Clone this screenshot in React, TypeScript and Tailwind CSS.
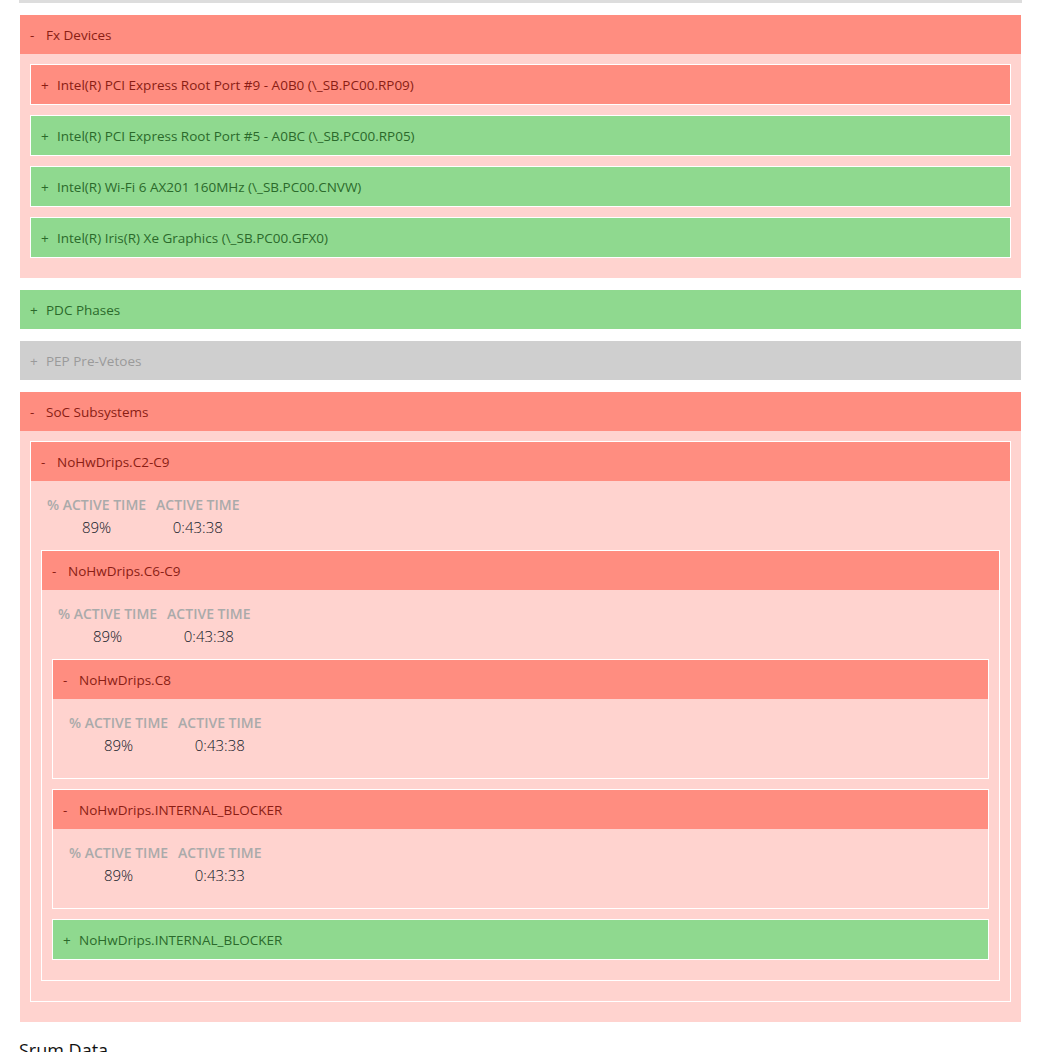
import type { ReactNode } from 'react';

type Tone = 'red' | 'green' | 'gray';

const headerTone: Record<Tone, string> = {
    red: 'bg-[#ff8d80] text-[#8a1d14]',
    green: 'bg-[#8fd98f] text-[#2b6a2b]',
    gray: 'bg-[#cfcfcf] text-[#9a9a9a]',
};

function Section({ title, tone, open, children }: { title: string; tone: Tone; open?: boolean; children?: ReactNode }) {
    return (
        <div className="mb-[10px] border border-white">
            <div className={`flex h-[39px] items-center pl-[10px] pt-[1px] text-[13.5px] ${headerTone[tone]}`}>
                <span className="inline-block w-[16px]">{open ? '-' : '+'}</span>
                <span>{title}</span>
            </div>
            {open && <div className="bg-[#ffd3cf] p-[10px]">{children}</div>}
        </div>
    );
}

function Stats({ pct, time }: { pct: string; time: string }) {
    return (
        <div className="mb-[10px] h-[49px] pl-[1px]">
            <div className="inline-grid grid-cols-[auto_auto]">
                <div className="flex h-[26px] items-center px-[5px] text-[14px] font-semibold text-[#aaaaaa]">% ACTIVE TIME</div>
                <div className="flex h-[26px] items-center px-[5px] text-[14px] font-semibold text-[#aaaaaa]">ACTIVE TIME</div>
                <div className="h-[20px] px-[5px] text-center text-[15px] font-light leading-[20px] text-[#111827]">{pct}</div>
                <div className="h-[20px] px-[5px] text-center text-[15px] font-light leading-[20px] text-[#111827]">{time}</div>
            </div>
        </div>
    );
}

export default function App() {
    return (
        <div className="min-h-screen bg-white font-['Open_Sans',sans-serif]">
            <div className="ml-[19px] w-[1003px]">
                <div className="mb-[10px] h-[4px] border-b border-white bg-[#dddddd]" />

                <Section title="Fx Devices" tone="red" open>
                    <Section title="Intel(R) PCI Express Root Port #9 - A0B0 (\_SB.PC00.RP09)" tone="red" />
                    <Section title="Intel(R) PCI Express Root Port #5 - A0BC (\_SB.PC00.RP05)" tone="green" />
                    <Section title="Intel(R) Wi-Fi 6 AX201 160MHz (\_SB.PC00.CNVW)" tone="green" />
                    <Section title="Intel(R) Iris(R) Xe Graphics (\_SB.PC00.GFX0)" tone="green" />
                </Section>

                <Section title="PDC Phases" tone="green" />
                <Section title="PEP Pre-Vetoes" tone="gray" />

                <Section title="SoC Subsystems" tone="red" open>
                    <Section title="NoHwDrips.C2-C9" tone="red" open>
                        <Stats pct="89%" time="0:43:38" />
                        <Section title="NoHwDrips.C6-C9" tone="red" open>
                            <Stats pct="89%" time="0:43:38" />
                            <Section title="NoHwDrips.C8" tone="red" open>
                                <Stats pct="89%" time="0:43:38" />
                            </Section>
                            <Section title="NoHwDrips.INTERNAL_BLOCKER" tone="red" open>
                                <Stats pct="89%" time="0:43:33" />
                            </Section>
                            <Section title="NoHwDrips.INTERNAL_BLOCKER" tone="green" />
                        </Section>
                    </Section>
                </Section>
            </div>
            <div className="ml-[19px] mt-[15px] text-[18px] leading-[24px] text-[#111]">Srum Data</div>
        </div>
    );
}
